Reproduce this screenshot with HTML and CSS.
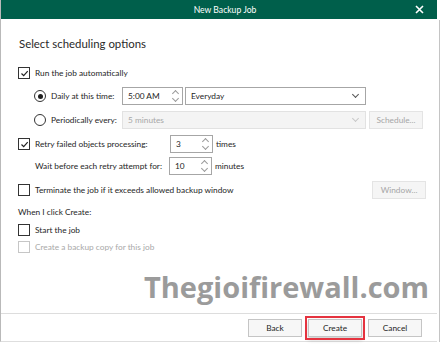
FILE: index.html
```html
<!DOCTYPE html>
<html lang="en">
<head>
    <meta charset="UTF-8">
    <title>New Backup Job</title>
    <link rel="stylesheet" href="styles.css">
</head>
<body>
    <div class="screen">
        <div class="dialog">
            <!-- Title bar -->
            <div class="titlebar">
                <span class="title">New Backup Job</span>
                <svg class="close" width="9" height="9" viewBox="0 0 9 9"><path d="M1 1L8 8M8 1L1 8" stroke="#fff" stroke-width="1.6"/></svg>
            </div>

            <div class="content">
                <h1>Select scheduling options</h1>

                <div class="row row-run">
                    <span class="check on"><svg width="9" height="9" viewBox="0 0 9 9"><path d="M1.5 4.5L3.7 6.7L7.7 2.2" fill="none" stroke="#222" stroke-width="1.2"/></svg></span>
                    <span>Run the job automatically</span>
                </div>

                <div class="row row-daily indent">
                    <span class="radio on"></span>
                    <span class="lbl-radio">Daily at this time:</span>
                    <span class="field spin time"><span class="val">5:00 AM</span><span class="arrows"><i class="up"></i><i class="down"></i></span></span>
                    <span class="field select every"><span class="val">Everyday</span><i class="chev"></i></span>
                </div>

                <div class="row row-periodic indent">
                    <span class="radio"></span>
                    <span class="lbl-radio">Periodically every:</span>
                    <span class="field select disabled period"><span class="val">5 minutes</span><i class="chev"></i></span>
                    <span class="btn disabled">Schedule...</span>
                </div>

                <div class="row row-retry">
                    <span class="check on"><svg width="9" height="9" viewBox="0 0 9 9"><path d="M1.5 4.5L3.7 6.7L7.7 2.2" fill="none" stroke="#222" stroke-width="1.2"/></svg></span>
                    <span class="lbl-retry">Retry failed objects processing:</span>
                    <span class="field spin num"><span class="val">3</span><span class="arrows"><i class="up"></i><i class="down"></i></span></span>
                    <span class="unit">times</span>
                </div>

                <div class="row row-wait">
                    <span class="lbl-wait">Wait before each retry attempt for:</span>
                    <span class="field spin num"><span class="val">10</span><span class="arrows"><i class="up"></i><i class="down"></i></span></span>
                    <span class="unit">minutes</span>
                </div>

                <div class="row row-term">
                    <span class="check"></span>
                    <span class="lbl-term">Terminate the job if it exceeds allowed backup window</span>
                    <span class="btn disabled">Window...</span>
                </div>

                <div class="row row-when">When I click Create:</div>

                <div class="row row-start">
                    <span class="check"></span>
                    <span>Start the job</span>
                </div>

                <div class="row row-copy muted">
                    <span class="check off"></span>
                    <span>Create a backup copy for this job</span>
                </div>

                <div class="watermark">Thegioifirewall.com</div>
            </div>

            <!-- Footer buttons -->
            <div class="footer">
                <span class="btn">Back</span>
                <span class="btn primary">Create</span>
                <span class="btn">Cancel</span>
            </div>
        </div>
        <div class="edge"></div>
    </div>
</body>
</html>
```

FILE: styles.css
```css
body {
    margin: 0;
    background-color: #ffffff;
    font-family: Lato, 'Noto Sans', Arial, sans-serif;
    font-size: 8.3px;
    color: #1e1e1e;
    white-space: nowrap;
}
.screen {
    display: flex;
    height: 347px;
    overflow: hidden;
}
.dialog {
    width: 436px;
    height: 341px;
    border-left: 1px solid #b9b9b9;
    border-bottom: 1px solid #dedede;
    background-color: #ffffff;
    display: flex;
    flex-direction: column;
}
.edge {
    width: 1px;
    margin-left: 2px;
    margin-top: 20px;
    height: 322px;
    background-color: #c4c4c4;
}
.titlebar {
    height: 19px;
    background-color: #005f4b;
    color: #ffffff;
    position: relative;
    display: flex;
    align-items: center;
    justify-content: center;
    font-size: 8.6px;
}
.title {
    margin-left: 12px;
}
.close {
    position: absolute;
    right: 13px;
    top: 5px;
}
.content {
    flex: 1;
    padding: 0 16px 0 17px;
}
h1 {
    font-size: 11.4px;
    font-weight: normal;
    color: #2a2a2a;
    margin: 17px 0 0 1px;
    line-height: 16px;
}
.row {
    display: flex;
    align-items: center;
    height: 16px;
}
.indent {
    padding-left: 16px;
}
.row-run { margin-top: 13px; }
.row-daily { margin-top: 6px; height: 18px; }
.row-periodic { margin-top: 6px; height: 18px; }
.row-retry { margin-top: 6px; height: 18px; }
.row-wait { margin-top: 4px; height: 18px; padding-left: 17px; }
.row-term { margin-top: 6px; height: 18px; }
.row-when { margin-top: 5px; }
.row-start { margin-top: 2px; }
.row-copy { margin-top: 1px; }
.check {
    width: 10px;
    height: 10px;
    border: 1px solid #333;
    margin-right: 5px;
    display: inline-flex;
    align-items: center;
    justify-content: center;
    flex: none;
}
.check.off {
    border-color: #c6c6c6;
}
.muted {
    color: #a9a9a9;
}
.radio {
    width: 10px;
    height: 10px;
    border: 1px solid #333;
    border-radius: 50%;
    margin-right: 5px;
    position: relative;
    flex: none;
}
.radio.on::after {
    content: '';
    position: absolute;
    left: 2.5px;
    top: 2.5px;
    width: 5px;
    height: 5px;
    border-radius: 50%;
    background-color: #1e1e1e;
}
.lbl-radio {
    width: 71px;
    flex: none;
}
.lbl-retry {
    width: 135px;
    flex: none;
}
.lbl-wait {
    width: 134px;
    flex: none;
}
.lbl-term {
    width: 334px;
    flex: none;
}
.field {
    height: 16px;
    border: 1px solid #a6a6a6;
    display: flex;
    align-items: center;
    position: relative;
    box-sizing: content-box;
    flex: none;
}
.field .val {
    padding-left: 5px;
    flex: 1;
}
.time {
    width: 59px;
}
.every {
    width: 179px;
    margin-left: 2px;
}
.period {
    width: 242px;
}
.num {
    width: 41px;
}
.arrows {
    width: 14px;
    height: 16px;
    display: flex;
    flex-direction: column;
    align-items: center;
    justify-content: space-around;
}
.arrows i {
    width: 4px;
    height: 4px;
    border-left: 1px solid #9a9a9a;
    border-top: 1px solid #9a9a9a;
}
.arrows .up {
    transform: rotate(45deg);
    margin-top: 3px;
}
.arrows .down {
    transform: rotate(225deg);
    margin-bottom: 3px;
}
.chev {
    width: 4px;
    height: 4px;
    border-right: 1px solid #555;
    border-bottom: 1px solid #555;
    transform: rotate(45deg);
    margin: 0 7px 3px 0;
}
.field.disabled {
    background-color: #f4f4f4;
    border-color: #e2e2e2;
    color: #a8a8a8;
}
.field.disabled .chev {
    border-color: #c8c8c8;
}
.unit {
    margin-left: 3px;
}
.btn {
    width: 52px;
    height: 16px;
    border: 1px solid #c5c5c5;
    background-color: #f7f7f7;
    display: inline-flex;
    align-items: center;
    justify-content: center;
    margin-left: 3px;
    flex: none;
}
.btn.disabled {
    color: #a6a6a6;
    background-color: #f5f5f5;
    border-color: #e4e4e4;
}
.watermark {
    text-align: right;
    font-family: 'Open Sans', Arial, sans-serif;
    font-weight: bold;
    font-size: 29px;
    color: #9b9b9b;
    line-height: 30px;
    margin-top: 17px;
    margin-right: -8px;
}
.footer {
    height: 27px;
    border-top: 1px solid #dddddd;
    display: flex;
    align-items: center;
    justify-content: flex-end;
    padding-right: 15px;
    gap: 5px;
}
.footer .btn {
    margin-left: 0;
}
.btn.primary {
    outline: 2px solid #e5333f;
    outline-offset: 1px;
    box-shadow: 0 3px 4px rgba(0, 0, 0, 0.18);
    margin: 0 1px;
}
```
